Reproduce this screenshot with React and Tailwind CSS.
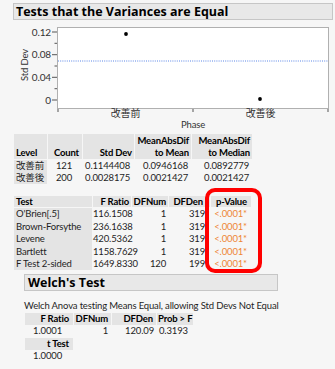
import React from "react";

const F = { fontFamily: 'Lato,"Noto Sans CJK JP",sans-serif' };
const FH = { fontFamily: '"Open Sans","Noto Sans CJK JP",sans-serif' };

function Chart() {
  const minor = [43.3, 66, 88.7];
  const major = [
    [32, "0.12"],
    [54.7, "0.08"],
    [77.3, "0.04"],
    [100, "0"],
  ];
  return (
    <svg width="335" height="110" viewBox="0 20 335 110" className="block">
      <rect x="57.5" y="27.5" width="271" height="81" fill="#ffffff" stroke="#b0b0b0" />
      {major.map(([y, t]) => (
        <g key={t}>
          <line x1="52" x2="57" y1={y} y2={y} stroke="#555" />
          <text x="51" y={y + 3.5} fontSize="10" textAnchor="end" fill="#333" style={F}>
            {t}
          </text>
        </g>
      ))}
      {minor.map((y) => (
        <line key={y} x1="54.5" x2="57" y1={y} y2={y} stroke="#555" />
      ))}
      <line x1="193" x2="193" y1="109" y2="112" stroke="#555" />
      <line x1="328" x2="328" y1="109" y2="112" stroke="#555" />
      <line x1="58" x2="58" y1="109" y2="112" stroke="#555" />
      <line x1="58" x2="328" y1="61" y2="61" stroke="#5b86e6" strokeDasharray="1 1.2" />
      <circle cx="126" cy="34" r="1.9" fill="#000" />
      <circle cx="260" cy="99" r="1.9" fill="#000" />
      <text x="125.5" y="117" fontSize="10" textAnchor="middle" fill="#333" style={F}>改善前</text>
      <text x="260.5" y="117" fontSize="10" textAnchor="middle" fill="#333" style={F}>改善後</text>
      <text x="193" y="128" fontSize="9.5" textAnchor="middle" fill="#333" style={F}>Phase</text>
      <text
        x="0"
        y="0"
        fontSize="9.5"
        textAnchor="middle"
        fill="#333"
        style={F}
        transform="translate(28 65) rotate(-90)"
      >
        Std Dev
      </text>
    </svg>
  );
}

const H = "bg-[#e4e4e4] font-bold text-black";
const G = "bg-[#e4e4e4] pl-[2px]";

export default function App() {
  return (
    <div
      className="relative w-[335px] h-[369px] overflow-hidden bg-[#f6f6f6] pt-[3px] text-[9.5px] leading-[12px] tracking-[-0.15px] text-[#1e1e1e] whitespace-nowrap"
      style={F}
    >
      {/* header */}
      <div
        className="ml-[13px] w-[320px] h-[17px] border border-[#c6c6c6] bg-[#e8e8e8] pl-[2px] text-[12.5px] leading-[15px] tracking-normal font-bold text-black"
        style={FH}
      >
        Tests that the Variances are Equal
      </div>

      <Chart />

      {/* table 1 */}
      <div className="ml-[14px] mt-[4px] grid grid-cols-[33px_34px_51px_56px_60px] gap-x-[1px]">
        <div className={`${H} h-[25px] flex items-end pl-[2px]`}>Level</div>
        <div className={`${H} h-[25px] flex items-end justify-end pr-[3px]`}>Count</div>
        <div className={`${H} h-[25px] flex items-end justify-end pr-[2px]`}>Std Dev</div>
        <div className={`${H} h-[25px] text-right pr-[2px] pt-[1px]`}>MeanAbsDif<br />to Mean</div>
        <div className={`${H} h-[25px] text-right pr-[2px] pt-[1px]`}>MeanAbsDif<br />to Median</div>

        <div className={`${G} mt-[1px]`}>改善前</div>
        <div className="text-right pr-[10px] mt-[1px]">121</div>
        <div className="text-right pr-[4px] mt-[1px]">0.1144408</div>
        <div className="text-right pr-[3px] mt-[1px]">0.0946168</div>
        <div className="text-right pr-[3px] mt-[1px]">0.0892779</div>

        <div className={G}>改善後</div>
        <div className="text-right pr-[10px]">200</div>
        <div className="text-right pr-[4px]">0.0028175</div>
        <div className="text-right pr-[3px]">0.0021427</div>
        <div className="text-right pr-[3px]">0.0021427</div>
      </div>

      {/* table 2 */}
      <div className="ml-[14px] mt-[12px] grid grid-cols-[78px_38px_36px_41px_40px] gap-x-[1px] auto-rows-[12.4px]">
        <div className={`${H} pl-[2px] mb-[1px]`}>Test</div>
        <div className={`${H} text-right pr-[2px] mb-[1px]`}>F Ratio</div>
        <div className={`${H} text-right pr-[2px] mb-[1px]`}>DFNum</div>
        <div className={`${H} text-right pr-[7px] mb-[1px]`}>DFDen</div>
        <div className={`${H} text-right pr-[4px] mb-[1px]`}>p-Value</div>
        {[
          ["O'Brien[.5]", "116.1508", "1", "319"],
          ["Brown-Forsythe", "236.1638", "1", "319"],
          ["Levene", "420.5362", "1", "319"],
          ["Bartlett", "1158.7629", "1", "319"],
          ["F Test 2-sided", "1649.8330", "120", "199"],
        ].map(([a, b, c, d]) => (
          <React.Fragment key={a}>
            <div className={G}>{a}</div>
            <div className="text-right pr-[6px]">{b}</div>
            <div className="text-right pr-[2px]">{c}</div>
            <div className="text-right pr-[5px]">{d}</div>
            <div className="text-right pr-[4px] text-[#ee8636]">&lt;.0001*</div>
          </React.Fragment>
        ))}
      </div>

      {/* Welch header */}
      <div
        className="ml-[24px] mt-[4px] w-[254px] h-[17px] border border-[#c6c6c6] bg-[#e8e8e8] pl-[3px] text-[12.5px] leading-[15px] tracking-normal font-bold text-black"
        style={FH}
      >
        Welch's Test
      </div>

      <div className="ml-[24px] mt-[9px]">
        Welch Anova testing Means Equal, allowing Std Devs Not Equal
      </div>

      <div className="ml-[25px] mt-[1px] grid grid-cols-[48px_37px_44px_36px] gap-x-[1px]">
        <div className={`${H} h-[12px] text-right pr-[4px]`}>F Ratio</div>
        <div className={`${H} h-[12px] text-right pr-[3px]`}>DFNum</div>
        <div className={`${H} h-[12px] text-right pr-[3px]`}>DFDen</div>
        <div className={`${H} h-[12px] pl-[1px]`}>Prob &gt; F</div>
        <div className="text-right pr-[11px]">1.0001</div>
        <div className="text-right pr-[3px]">1</div>
        <div className="text-right pr-[2px]">120.09</div>
        <div className="pl-[2px]">0.3193</div>
      </div>
      <div className="ml-[25px] mt-[1px] w-[48px]">
        <div className={`${H} h-[12px] text-right pr-[4px]`}>t Test</div>
        <div className="text-right pr-[11px]">1.0000</div>
      </div>

      {/* red highlight */}
      <div className="absolute left-[205px] top-[188px] w-[57px] h-[85px] border-[4px] border-[#ff0000] rounded-[10px]" />
    </div>
  );
}
